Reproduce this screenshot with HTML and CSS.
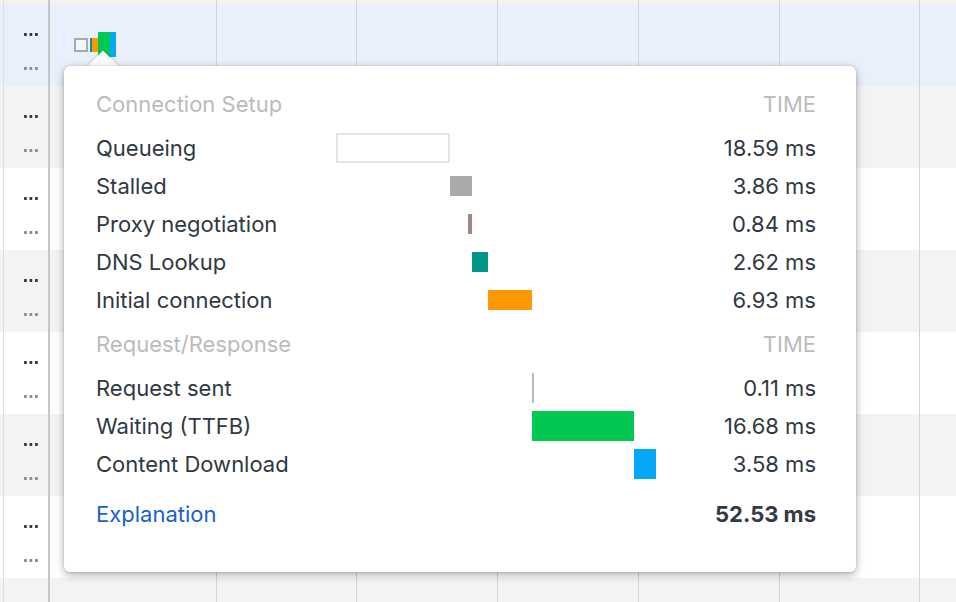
FILE: index.html
```html
<!DOCTYPE html>
<html>
<head>
<meta charset="utf-8">
<link rel="stylesheet" href="styles.css">
</head>
<body>
<div class="grid">
  <div class="row gray"><div class="c c0"></div><div class="c c1"><i class="dots dark"></i><i class="dots light"></i></div><div class="c c2"></div><div class="c c3"></div><div class="c c4"></div><div class="c c5"></div><div class="c c6"></div><div class="c c7"></div><div class="c c8"></div></div>
  <div class="row sel"><div class="c c0"></div><div class="c c1"><i class="dots dark"></i><i class="dots light"></i></div><div class="c c2"><div class="mini"><span class="m-q"></span><span class="m-dns"></span><span class="m-ssl"></span><span class="m-wait"></span><span class="m-dl"></span></div></div><div class="c c3"></div><div class="c c4"></div><div class="c c5"></div><div class="c c6"></div><div class="c c7"></div><div class="c c8"></div></div>
  <div class="row gray"><div class="c c0"></div><div class="c c1"><i class="dots dark"></i><i class="dots light"></i></div><div class="c c2"></div><div class="c c3"></div><div class="c c4"></div><div class="c c5"></div><div class="c c6"></div><div class="c c7"></div><div class="c c8"></div></div>
  <div class="row"><div class="c c0"></div><div class="c c1"><i class="dots dark"></i><i class="dots light"></i></div><div class="c c2"></div><div class="c c3"></div><div class="c c4"></div><div class="c c5"></div><div class="c c6"></div><div class="c c7"></div><div class="c c8"></div></div>
  <div class="row gray"><div class="c c0"></div><div class="c c1"><i class="dots dark"></i><i class="dots light"></i></div><div class="c c2"></div><div class="c c3"></div><div class="c c4"></div><div class="c c5"></div><div class="c c6"></div><div class="c c7"></div><div class="c c8"></div></div>
  <div class="row"><div class="c c0"></div><div class="c c1"><i class="dots dark"></i><i class="dots light"></i></div><div class="c c2"></div><div class="c c3"></div><div class="c c4"></div><div class="c c5"></div><div class="c c6"></div><div class="c c7"></div><div class="c c8"></div></div>
  <div class="row gray"><div class="c c0"></div><div class="c c1"><i class="dots dark"></i><i class="dots light"></i></div><div class="c c2"></div><div class="c c3"></div><div class="c c4"></div><div class="c c5"></div><div class="c c6"></div><div class="c c7"></div><div class="c c8"></div></div>
  <div class="row"><div class="c c0"></div><div class="c c1"><i class="dots dark"></i><i class="dots light"></i></div><div class="c c2"></div><div class="c c3"></div><div class="c c4"></div><div class="c c5"></div><div class="c c6"></div><div class="c c7"></div><div class="c c8"></div></div>
  <div class="row gray last"><div class="c c0"></div><div class="c c1"></div><div class="c c2"></div><div class="c c3"></div><div class="c c4"></div><div class="c c5"></div><div class="c c6"></div><div class="c c7"></div><div class="c c8"></div></div>
</div>

<div class="popover">
  <div class="arrow"></div>
  <div class="card">
    <div class="trow hdr"><span class="lbl">Connection Setup</span><span></span><span class="val">TIME</span></div>
    <div class="trow"><span class="lbl">Queueing</span><div class="track"><div class="bar queue" style="margin-left:0px;width:114px"></div></div><span class="val">18.59 ms</span></div>
    <div class="trow"><span class="lbl">Stalled</span><div class="track"><div class="bar stalled" style="margin-left:114px;width:22px"></div></div><span class="val">3.86 ms</span></div>
    <div class="trow"><span class="lbl">Proxy negotiation</span><div class="track"><div class="bar proxy" style="margin-left:132px;width:4px"></div></div><span class="val">0.84 ms</span></div>
    <div class="trow"><span class="lbl">DNS Lookup</span><div class="track"><div class="bar dns" style="margin-left:136px;width:16px"></div></div><span class="val">2.62 ms</span></div>
    <div class="trow"><span class="lbl">Initial connection</span><div class="track"><div class="bar conn" style="margin-left:152px;width:44px"></div></div><span class="val">6.93 ms</span></div>
    <div class="trow hdr hdr2"><span class="lbl">Request/Response</span><span></span><span class="val">TIME</span></div>
    <div class="trow"><span class="lbl">Request sent</span><div class="track"><div class="bar tall sent" style="margin-left:196px;width:2px"></div></div><span class="val">0.11 ms</span></div>
    <div class="trow"><span class="lbl">Waiting (TTFB)</span><div class="track"><div class="bar tall wait" style="margin-left:196px;width:102px"></div></div><span class="val">16.68 ms</span></div>
    <div class="trow"><span class="lbl">Content Download</span><div class="track"><div class="bar tall dl" style="margin-left:298px;width:22px"></div></div><span class="val">3.58 ms</span></div>
    <div class="trow foot"><a class="lbl link" href="#">Explanation</a><span></span><span class="val total">52.53 ms</span></div>
  </div>
</div>
</body>
</html>
```

FILE: styles.css
```css
html, body {
  margin: 0;
  padding: 0;
}
body {
  width: 956px;
  height: 602px;
  overflow: hidden;
  background: #fff;
  position: relative;
  font-family: Inter, "Noto Sans", "Liberation Sans", sans-serif;
}

/* background grid */
.grid {
  margin-top: -78px;
  display: flex;
  flex-direction: column;
}
.row {
  height: 82px;
  display: flex;
  background: #fff;
}
.row.last { height: 24px; }
.row.gray { background: #f3f3f3; }
.row.sel { background: #e9f0fb; }
.c {
  height: 100%;
  box-sizing: border-box;
  flex: none;
  border-right: 1px solid #d4d4d4;
}
.c0 { width: 4px; border-right-color: #dedede; }
.c1 {
  width: 46px;
  border-right: 2px solid #c6c6c6;
  display: flex;
  flex-direction: column;
  padding: 29px 0 0 20px;
  gap: 31px;
}
.c2 { width: 167px; }
.c3 { width: 140px; }
.c4 { width: 141px; }
.c5 { width: 141px; }
.c6 { width: 141px; }
.c7 { width: 140px; }
.c8 { flex: 1; border-right: none; }

.dots {
  display: block;
  width: 14px;
  height: 3px;
  background: radial-gradient(circle at 1.5px 1.5px, currentColor 1.4px, transparent 1.7px) 0 0 / 5.5px 3px repeat-x;
}
.dots.dark { color: #303942; }
.dots.light { color: #8a8a8a; }

.mini {
  display: flex;
  align-items: flex-start;
  padding: 28px 0 0 24px;
}
.mini span { display: block; flex: none; }
.m-q {
  width: 14px;
  height: 14px;
  margin-top: 6px;
  box-sizing: border-box;
  border: 2px solid #a9a9a9;
  background: #f4f7fc;
}
.m-dns { width: 2px; height: 14px; margin: 6px 0 0 2px; background: #009688; }
.m-ssl { width: 6px; height: 14px; margin-top: 6px; background: #ff9800; }
.m-wait { width: 12px; height: 25px; background: #00c853; }
.m-dl { width: 6px; height: 25px; background: #03a9f4; }

/* popover */
.popover {
  position: absolute;
  left: 64px;
  top: 66px;
  width: 792px;
  height: 506px;
}
.arrow {
  position: absolute;
  left: 28px;
  top: -11px;
  width: 22px;
  height: 22px;
  background: #fff;
  transform: rotate(45deg);
  box-shadow: 0 0 3px rgba(0, 0, 0, 0.25);
}
.card {
  position: relative;
  box-sizing: border-box;
  width: 100%;
  height: 100%;
  background: #fff;
  border-radius: 6px;
  box-shadow: 0 3px 9px rgba(0, 0, 0, 0.32), 0 0 2px rgba(0, 0, 0, 0.18);
  padding: 19px 40px 0 32px;
  display: flex;
  flex-direction: column;
  font-size: 22px;
  color: #303942;
}
.trow {
  display: grid;
  grid-template-columns: 240px 1fr auto;
  align-items: center;
  height: 38px;
  line-height: 38px;
  flex: none;
}
.hdr {
  color: #bbbbbb;
  margin-bottom: 6px;
}
.hdr2 { margin-top: 6px; }
.foot { margin-top: 12px; }
.lbl { white-space: nowrap; }
.val { text-align: right; white-space: nowrap; }
.link {
  color: #1a5fd0;
  text-decoration: none;
}
.total { font-weight: 700; color: #333a44; }

.track {
  display: flex;
  align-items: center;
  height: 38px;
}
.bar {
  flex: none;
  height: 20px;
  box-sizing: border-box;
}
.bar.tall { height: 30px; }
.queue {
  height: 30px;
  background: #fff;
  border: 2px solid #e4e4e4;
}
.stalled { background: #aaaaaa; }
.proxy { background: #a1887f; }
.dns { background: #009688; }
.conn { background: #ff9800; }
.sent { background: #b0bec5; }
.wait { background: #00c853; }
.dl { background: #03a9f4; }
```
